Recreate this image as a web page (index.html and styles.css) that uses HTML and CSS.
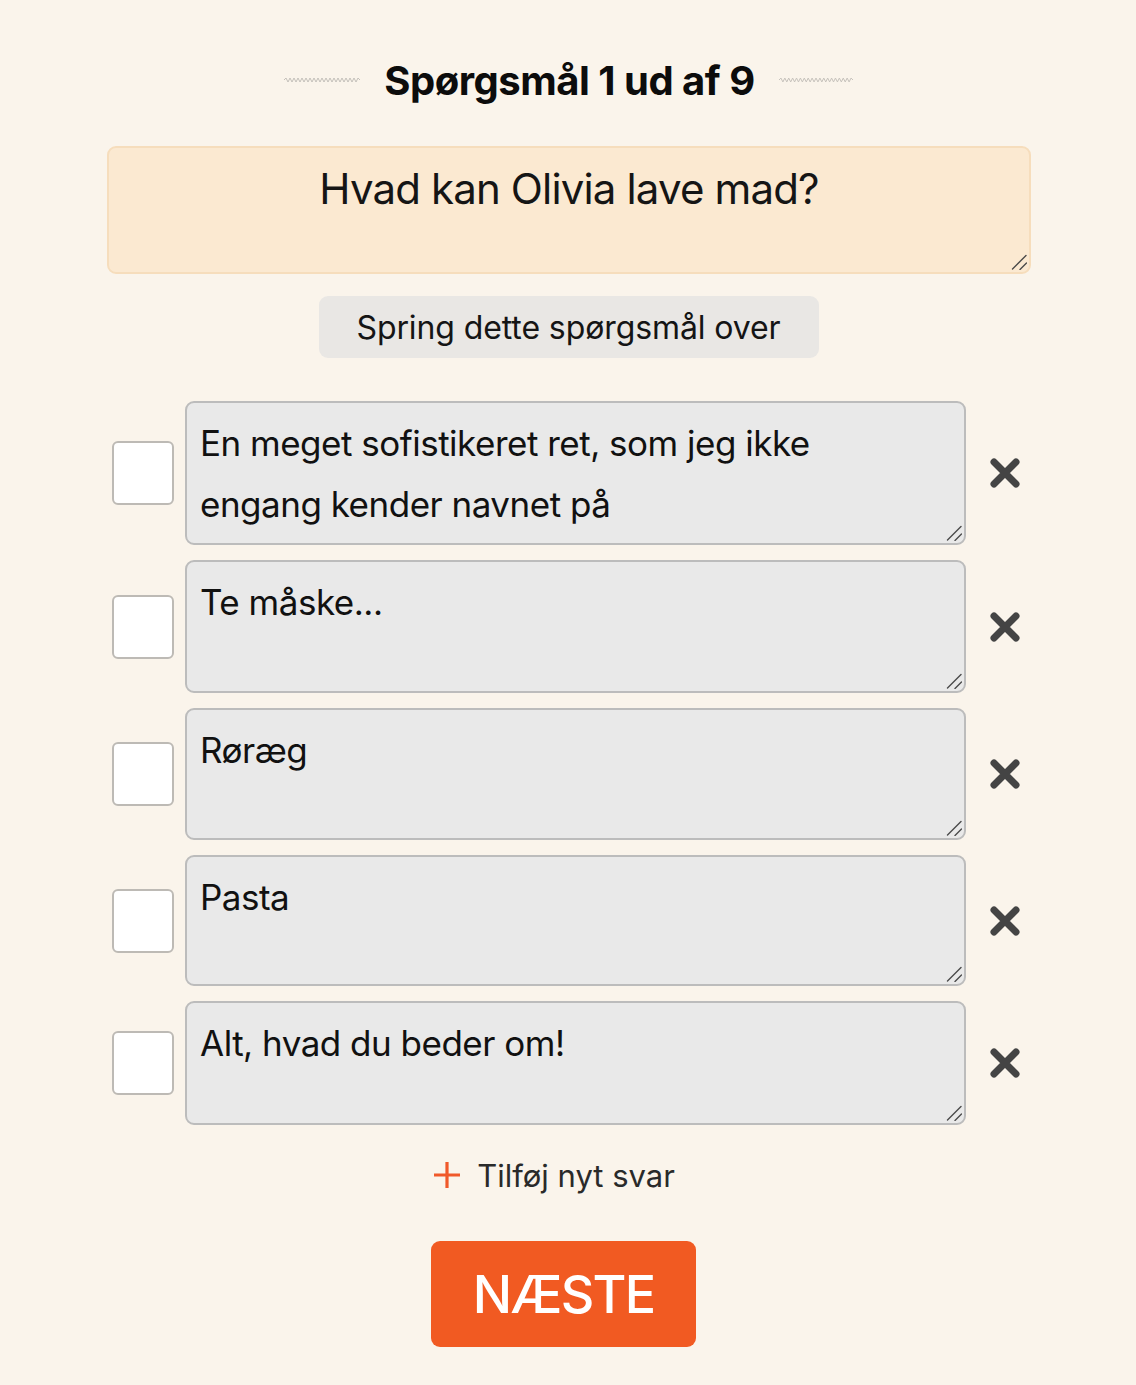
FILE: index.html
```html
<!DOCTYPE html>
<html lang="da">
<head>
<meta charset="utf-8">
<title>Spørgsmål</title>
<link rel="stylesheet" href="styles.css">
</head>
<body>
<main class="page">
  <header class="head">
    <svg class="wave" width="76" height="6" viewBox="0 0 76 6"><polyline points="0,3 2,1 4,5 6,1 8,5 10,1 12,5 14,1 16,5 18,1 20,5 22,1 24,5 26,1 28,5 30,1 32,5 34,1 36,5 38,1 40,5 42,1 44,5 46,1 48,5 50,1 52,5 54,1 56,5 58,1 60,5 62,1 64,5 66,1 68,5 70,1 72,5 74,1 76,3" fill="none" stroke="#c4c0ba" stroke-width="1"/></svg>
    <h1 class="title">Spørgsmål 1 ud af 9</h1>
    <svg class="wave" width="74" height="6" viewBox="0 0 76 6"><polyline points="0,3 2,1 4,5 6,1 8,5 10,1 12,5 14,1 16,5 18,1 20,5 22,1 24,5 26,1 28,5 30,1 32,5 34,1 36,5 38,1 40,5 42,1 44,5 46,1 48,5 50,1 52,5 54,1 56,5 58,1 60,5 62,1 64,5 66,1 68,5 70,1 72,5 74,1 76,3" fill="none" stroke="#c4c0ba" stroke-width="1"/></svg>
  </header>

  <div class="field qfield">
    <textarea class="question">Hvad kan Olivia lave mad?</textarea>
    <svg class="grip" width="16" height="16" viewBox="0 0 16 16"><path d="M1.5 15 L15 1.5 M9 15.5 L15.5 9" stroke="#4a4a4a" stroke-width="1.4" stroke-linecap="round"/></svg>
  </div>

  <div class="skip-wrap"><button class="skip">Spring dette spørgsmål over</button></div>

  <ul class="answers">
    <li class="row r1">
      <input type="checkbox" class="check">
      <div class="field afield">
        <textarea class="answer">En meget sofistikeret ret, som jeg ikke engang kender navnet på</textarea>
        <svg class="grip" width="16" height="16" viewBox="0 0 16 16"><path d="M1.5 15 L15 1.5 M9 15.5 L15.5 9" stroke="#4a4a4a" stroke-width="1.4" stroke-linecap="round"/></svg>
      </div>
      <span class="del"><svg width="32" height="32" viewBox="0 0 32 32"><path d="M5 5 L27 27 M27 5 L5 27" stroke="#444" stroke-width="7" stroke-linecap="round"/></svg></span>
    </li>
    <li class="row r2">
      <input type="checkbox" class="check">
      <div class="field afield">
        <textarea class="answer">Te måske...</textarea>
        <svg class="grip" width="16" height="16" viewBox="0 0 16 16"><path d="M1.5 15 L15 1.5 M9 15.5 L15.5 9" stroke="#4a4a4a" stroke-width="1.4" stroke-linecap="round"/></svg>
      </div>
      <span class="del"><svg width="32" height="32" viewBox="0 0 32 32"><path d="M5 5 L27 27 M27 5 L5 27" stroke="#444" stroke-width="7" stroke-linecap="round"/></svg></span>
    </li>
    <li class="row r3">
      <input type="checkbox" class="check">
      <div class="field afield">
        <textarea class="answer">Røræg</textarea>
        <svg class="grip" width="16" height="16" viewBox="0 0 16 16"><path d="M1.5 15 L15 1.5 M9 15.5 L15.5 9" stroke="#4a4a4a" stroke-width="1.4" stroke-linecap="round"/></svg>
      </div>
      <span class="del"><svg width="32" height="32" viewBox="0 0 32 32"><path d="M5 5 L27 27 M27 5 L5 27" stroke="#444" stroke-width="7" stroke-linecap="round"/></svg></span>
    </li>
    <li class="row r4">
      <input type="checkbox" class="check">
      <div class="field afield">
        <textarea class="answer">Pasta</textarea>
        <svg class="grip" width="16" height="16" viewBox="0 0 16 16"><path d="M1.5 15 L15 1.5 M9 15.5 L15.5 9" stroke="#4a4a4a" stroke-width="1.4" stroke-linecap="round"/></svg>
      </div>
      <span class="del"><svg width="32" height="32" viewBox="0 0 32 32"><path d="M5 5 L27 27 M27 5 L5 27" stroke="#444" stroke-width="7" stroke-linecap="round"/></svg></span>
    </li>
    <li class="row r5">
      <input type="checkbox" class="check">
      <div class="field afield">
        <textarea class="answer">Alt, hvad du beder om!</textarea>
        <svg class="grip" width="16" height="16" viewBox="0 0 16 16"><path d="M1.5 15 L15 1.5 M9 15.5 L15.5 9" stroke="#4a4a4a" stroke-width="1.4" stroke-linecap="round"/></svg>
      </div>
      <span class="del"><svg width="32" height="32" viewBox="0 0 32 32"><path d="M5 5 L27 27 M27 5 L5 27" stroke="#444" stroke-width="7" stroke-linecap="round"/></svg></span>
    </li>
  </ul>

  <div class="add-wrap">
    <button class="add"><svg class="plus" width="28" height="28" viewBox="0 0 28 28"><path d="M14 1 V27 M1 14 H27" stroke="#f0592a" stroke-width="3.2"/></svg><span>Tilføj nyt svar</span></button>
  </div>

  <div class="next-wrap"><button class="next">NÆSTE</button></div>
</main>
</body>
</html>
```

FILE: styles.css
```css
* { box-sizing: border-box; }
html, body { margin: 0; padding: 0; }
body {
  background: #faf4eb;
  font-family: Inter, "Liberation Sans", Arial, sans-serif;
  color: #111;
  height: 1385px;
  overflow: hidden;
}
.page {
  width: 924px;
  margin: 0 auto;
  padding-left: 1px;
}
.head {
  display: flex;
  align-items: center;
  justify-content: center;
  gap: 24px;
  height: 60px;
  margin-top: 50px;
}
.title {
  margin: 0;
  font-size: 40px;
  font-weight: 700;
  letter-spacing: -0.5px;
  color: #0c0c0c;
}
.field { position: relative; }
.grip {
  position: absolute;
  right: 4px;
  bottom: 4px;
  pointer-events: none;
}
.qfield {
  width: 924px;
  height: 128px;
  margin-top: 36px;
}
.question {
  display: block;
  width: 100%;
  height: 100%;
  resize: none;
  background: #fbe9d1;
  border: 2px solid #f6ddbc;
  border-radius: 9px;
  font-family: inherit;
  font-size: 42px;
  line-height: 1.2;
  letter-spacing: -0.85px;
  text-align: center;
  color: #151515;
  padding: 16px 20px 0;
  outline: none;
}
.skip-wrap { display: flex; justify-content: center; margin-top: 22px; }
.skip {
  width: 500px;
  height: 62px;
  border: none;
  border-radius: 9px;
  background: #e9e7e4;
  font-family: inherit;
  font-size: 32px;
  letter-spacing: -0.1px;
  color: #151515;
  padding: 0;
}
.answers {
  list-style: none;
  margin: 43px 0 0;
  padding: 0 0 0 5px;
  display: flex;
  flex-direction: column;
  gap: 15px;
}
.row {
  display: flex;
  align-items: center;
  height: 132px;
}
.r1 { height: 144px; }
.r2 { height: 133px; }
.r4 { height: 131px; }
.r5 { height: 124px; }
.check {
  appearance: none;
  -webkit-appearance: none;
  margin: 0 11px 0 0;
  width: 62px;
  height: 64px;
  flex: none;
  background: #fff;
  border: 2px solid #bdbab5;
  border-radius: 6px;
}
.afield {
  flex: none;
  width: 781px;
  height: 100%;
}
.answer {
  display: block;
  width: 100%;
  height: 100%;
  resize: none;
  background: #e9e9e9;
  border: 2px solid #bcbcbc;
  border-radius: 9px;
  font-family: inherit;
  font-size: 35px;
  line-height: 61px;
  letter-spacing: -0.5px;
  color: #111;
  padding: 10px 100px 0 13px;
  outline: none;
}
.del {
  flex: none;
  width: 78px;
  display: flex;
  justify-content: center;
  align-items: center;
}
.add-wrap { display: flex; justify-content: center; margin-top: 30px; padding-right: 29px; }
.add {
  display: flex;
  align-items: center;
  gap: 16px;
  background: none;
  border: none;
  padding: 0;
  font-family: inherit;
  font-size: 31px;
  color: #2a2a2a;
  height: 40px;
}
.next-wrap { display: flex; justify-content: center; margin-top: 46px; padding-right: 10px; }
.next {
  width: 265px;
  height: 106px;
  border: none;
  border-radius: 9px;
  background: #f15a22;
  color: #fff;
  font-family: inherit;
  font-size: 52px;
  font-weight: 500;
  letter-spacing: -1.8px;
  padding: 0;
}
```
